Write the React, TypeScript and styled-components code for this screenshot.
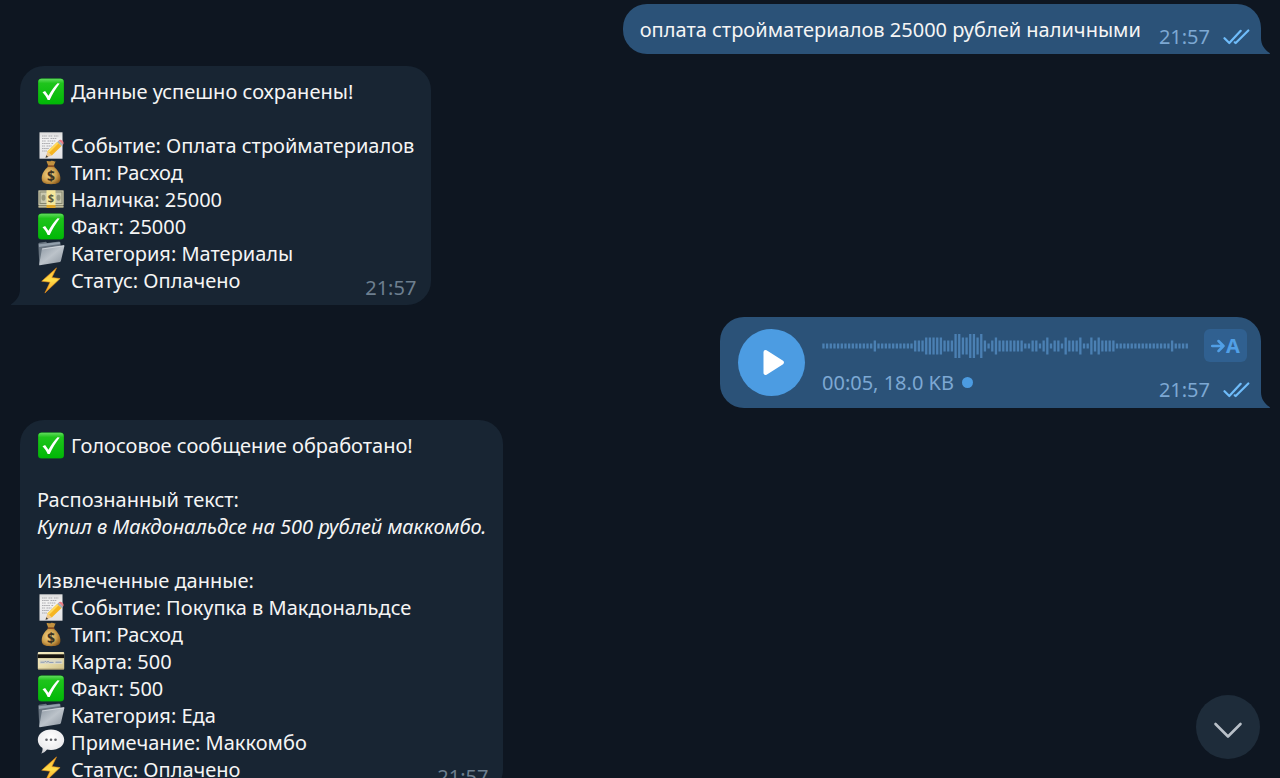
import React from "react";
import styled, { createGlobalStyle } from "styled-components";

const GlobalStyle = createGlobalStyle`
  *, *::before, *::after { box-sizing: border-box; }
  body {
    margin: 0;
    background: #0e1621;
    color: #f5f5f5;
    font-family: "Noto Sans", "Open Sans", sans-serif;
    font-size: 20px;
    line-height: 27px;
  }
  button { font: inherit; border: 0; padding: 0; cursor: pointer; }
`;

const Chat = styled.main`
  position: relative;
  height: 100vh;
  overflow: hidden;
`;

const Feed = styled.ol`
  display: flex;
  flex-direction: column;
  gap: 12px;
  margin: 0;
  padding: 4px 19px 12px 20px;
  list-style: none;
`;

const Bubble = styled.li<{ $own?: boolean }>`
  position: relative;
  align-self: ${(p) => (p.$own ? "flex-end" : "flex-start")};
  max-width: 100%;
  padding: 12px 17px 11px;
  background: ${(p) => (p.$own ? "#2b5278" : "#182533")};
  border-radius: ${(p) => (p.$own ? "24px 24px 0 24px" : "24px 24px 24px 0")};
`;

const VoiceBubble = styled(Bubble)`
  display: flex;
  gap: 17px;
  padding: 12px 14px 12px 18px;
`;

const TailShape = styled.svg<{ $own?: boolean }>`
  position: absolute;
  bottom: 0;
  width: 9px;
  height: 16px;
  ${(p) => (p.$own ? "left: 100%;" : "right: 100%; transform: scaleX(-1);")}
  fill: ${(p) => (p.$own ? "#2b5278" : "#182533")};
`;

const Line = styled.p`
  display: flex;
  gap: 6px;
  min-height: 27px;
  margin: 0;
  white-space: nowrap;
`;

const Quote = styled(Line)`
  font-style: italic;
`;

const LastLine = styled.div`
  display: flex;
  justify-content: space-between;
  gap: 18px;
`;

const Meta = styled.span<{ $own?: boolean; $outset: number }>`
  display: flex;
  align-items: center;
  gap: 13px;
  align-self: flex-end;
  margin: 0 -${(p) => p.$outset}px -7px 0;
  color: ${(p) => (p.$own ? "#7da8d3" : "#6d7f8f")};
`;

const Ticks = styled.svg`
  width: 27px;
  height: 16px;
  fill: none;
  stroke: #6fbcfa;
  stroke-width: 2.2;
  stroke-linecap: round;
  stroke-linejoin: round;
`;

const Emoji = styled.svg`
  flex: none;
  width: 28px;
  height: 27px;
`;

const Defs = styled.svg`
  position: absolute;
  width: 0;
  height: 0;
`;

const PlayButton = styled.button`
  flex: none;
  width: 67px;
  height: 67px;
  border-radius: 50%;
  background: #4c9ce2;
  svg { display: block; width: 67px; height: 67px; }
`;

const VoiceBody = styled.div`
  display: flex;
  flex-direction: column;
  gap: 7px;
`;

const VoiceTop = styled.div`
  display: flex;
  align-items: center;
  gap: 15px;
`;

const Wave = styled.svg`
  width: 367px;
  height: 24px;
  fill: #4b80b3;
`;

const TranscribeButton = styled.button`
  display: flex;
  align-items: center;
  justify-content: center;
  gap: 1px;
  width: 43px;
  height: 33px;
  border-radius: 6px;
  background: #306090;
  color: #519fe6;
  font-weight: 700;
  svg { width: 14px; height: 14px; }
`;

const VoiceBottom = styled.div`
  display: flex;
  justify-content: space-between;
  height: 27px;
`;

const VoiceInfo = styled.span`
  display: flex;
  align-items: center;
  gap: 8px;
  color: #7da8d3;
`;

const UnheardDot = styled.i`
  width: 11px;
  height: 11px;
  border-radius: 50%;
  background: #4c9ce2;
`;

const ScrollButton = styled.button`
  position: absolute;
  right: 20px;
  bottom: 19px;
  width: 64px;
  height: 64px;
  border-radius: 50%;
  background: #1e2c3a;
  svg { display: block; width: 64px; height: 64px; }
`;

const EmojiDefs = () => (
  <Defs aria-hidden="true">
    <defs>
      <linearGradient id="green" x1="0" y1="0" x2="0" y2="1">
        <stop offset="0" stopColor="#62dc5e" />
        <stop offset="0.18" stopColor="#1fc41c" />
        <stop offset="1" stopColor="#00b806" />
      </linearGradient>
      <linearGradient id="paper" x1="0" y1="0" x2="0" y2="1">
        <stop offset="0" stopColor="#dcdcdc" />
        <stop offset="0.3" stopColor="#f2f2f2" />
        <stop offset="1" stopColor="#e2e2e4" />
      </linearGradient>
      <radialGradient id="bag" cx="0.4" cy="0.45" r="0.65">
        <stop offset="0" stopColor="#f0d488" />
        <stop offset="0.6" stopColor="#cfa04c" />
        <stop offset="1" stopColor="#8a5a1c" />
      </radialGradient>
      <linearGradient id="folder" x1="0" y1="0" x2="1" y2="1">
        <stop offset="0" stopColor="#8b96a1" />
        <stop offset="0.5" stopColor="#bcc3ca" />
        <stop offset="1" stopColor="#8a939d" />
      </linearGradient>
      <linearGradient id="bolt" x1="0" y1="0" x2="0" y2="1">
        <stop offset="0" stopColor="#ffb52b" />
        <stop offset="0.5" stopColor="#ffde4a" />
        <stop offset="1" stopColor="#f79a1c" />
      </linearGradient>
      <linearGradient id="card" x1="0" y1="0" x2="1" y2="1">
        <stop offset="0" stopColor="#f5ecc4" />
        <stop offset="0.5" stopColor="#eadfae" />
        <stop offset="1" stopColor="#cfc188" />
      </linearGradient>
      <radialGradient id="speech" cx="0.5" cy="0.35" r="0.7">
        <stop offset="0" stopColor="#ffffff" />
        <stop offset="0.7" stopColor="#ececee" />
        <stop offset="1" stopColor="#bfc1c6" />
      </radialGradient>
    </defs>
  </Defs>
);

const drawings = {
  check: (
    <>
      <rect x="0.5" y="0.5" width="26" height="26" rx="3.5" fill="#0a9a10" />
      <rect x="0.9" y="0.7" width="25.2" height="25.2" rx="3.2" fill="url(#green)" />
      <path d="M5 14.3 L7.6 12.9 L11 17.8 C13.6 12.8 16.6 8.6 20 5.2 L22.2 5.4 C18.2 10.6 14.8 16 12.2 21.9 L10.2 21.9 C8.8 19 7.1 16.6 5 14.3 Z" fill="#fff" />
    </>
  ),
  memo: (
    <>
      <rect x="2" y="0.3" width="23" height="26.4" fill="url(#paper)" />
      <path d="M4.5 4h5M11 4h4M16.500 4h4.500M4.500 6.500h7M13 6.500h6M4.500 9h4M10 9h8M4.500 11.500h8M14 11.500h2M4.500 14h3M9 14h5M4.500 16.500h7M4.500 19h5" stroke="#a4a4a8" strokeWidth="0.9" strokeDasharray="1.6 0.5" />
      <path d="M8 25.800 L9.900 19.600 L14.300 23.600 Z" fill="#efc88c" />
      <path d="M8 25.800 L8.800 23.200 L10.800 24.900 Z" fill="#3c3a38" />
      <path d="M9.900 19.600 L19.700 9.900 L24.100 14 L14.300 23.600 Z" fill="#f5b522" />
      <path d="M9.900 19.600 L19.700 9.900 L21.200 11.300 L11.400 21 Z" fill="#ffd95a" />
      <path d="M19.700 9.900 L21.200 8.400 L25.600 12.500 L24.100 14 Z" fill="#a9adb2" />
      <path d="M21.200 8.400 C23.200 6.300 27.500 10 25.600 12.500 Z" fill="#ea7b84" />
    </>
  ),
  bag: (
    <>
      <path d="M9 2.600 C10.500 1.200 12 3 13.500 2 C15 1.200 16.500 3 18.200 2.300 L16 7.200 H11 Z" fill="#c2913f" />
      <path d="M10.800 7.500 C7 10.500 4 15 4.200 19.800 C4.400 24 7 25.200 13.500 25.200 C20 25.200 22.700 24 22.900 19.800 C23 15 20 10.500 16.200 7.500 Z" fill="url(#bag)" />
      <rect x="10" y="6.200" width="7" height="1.900" rx="0.900" fill="#8a4f22" />
      <text x="13.500" y="22" textAnchor="middle" fontSize="14" fontWeight="700" fill="#3a3222">$</text>
    </>
  ),
  cash: (
    <>
      <rect x="1" y="4.500" width="25" height="17.500" fill="#8f8c70" />
      <rect x="1" y="4.500" width="25" height="14.500" fill="#c9c8ae" />
      <rect x="2.500" y="6" width="22" height="11.500" fill="none" stroke="#85866f" strokeWidth="1" />
      <ellipse cx="6" cy="11.700" rx="2" ry="3" fill="#97987e" />
      <ellipse cx="21" cy="11.700" rx="2" ry="3" fill="#97987e" />
      <path d="M1 20.500h25" stroke="#c9c6a4" strokeWidth="0.800" />
      <rect x="9" y="4.300" width="9" height="14.700" fill="#f6e79a" />
      <rect x="9" y="19" width="9" height="3" fill="#e0a628" />
      <text x="13.500" y="15.800" textAnchor="middle" fontSize="11" fontWeight="700" fill="#5c5a3c">$</text>
    </>
  ),
  folder: (
    <>
      <path d="M0.800 3.800 L1.600 2.800 L8.500 1.800 L9.600 3 L21.800 1.400 L23 2.400 L23.200 16 L1.800 24.500 Z" fill="#66727e" />
      <path d="M1.400 4.300 L22.400 2.100 V4 L1.500 7 Z" fill="#93a0ac" />
      <path d="M5.200 8.300 L26.300 5.300 C26.800 5.300 27 5.600 26.900 6.100 L23.400 21 C23.300 21.500 23 21.800 22.500 21.900 L2.300 25.300 C1.900 25.300 1.600 25 1.700 24.600 L4.400 9 C4.500 8.600 4.800 8.400 5.200 8.300 Z" fill="url(#folder)" />
      <path d="M4.600 9 L26.600 5.800" stroke="#dce1e6" strokeWidth="0.700" />
    </>
  ),
  bolt: (
    <path d="M19 0.900 L4.200 14.200 L12.500 15.200 L7.400 26 L22.600 11.600 L14.400 10.500 Z" fill="url(#bolt)" stroke="#e78f1b" strokeWidth="0.600" strokeLinejoin="round" />
  ),
  card: (
    <>
      <rect x="0.300" y="4" width="26.400" height="17.500" rx="1" fill="url(#card)" />
      <rect x="0.300" y="6.300" width="26.400" height="3.800" fill="#17140e" />
      <rect x="2" y="11.600" width="23" height="4.400" fill="#dcd9c4" />
      <path d="M3 14.200h4l1-1 1.200 1.200 1.300-1 1.500 1h4M18 14.200h6" fill="none" stroke="#7d8fb2" strokeWidth="0.900" />
      <path d="M0.500 21h26" stroke="#a4966a" strokeWidth="0.800" />
    </>
  ),
  speech: (
    <>
      <path d="M13.500 0.400 C21 0.400 26.700 4.700 26.700 10.700 C26.700 16.700 21 21 13.500 21 C12 21 10.800 20.900 9.500 20.600 C7.800 22.800 5.800 24.300 3.600 24.600 C4.800 23 5.200 21.400 5 19 C2 17.200 0.300 14.200 0.300 10.700 C0.300 4.700 6 0.400 13.500 0.400 Z" fill="url(#speech)" />
      <g fill="#606268">
        <circle cx="9" cy="10.700" r="1.300" />
        <circle cx="13.500" cy="10.700" r="1.300" />
        <circle cx="18" cy="10.700" r="1.300" />
      </g>
    </>
  ),
};

type EmojiName = keyof typeof drawings;

const Item = ({ icon, children }: { icon: EmojiName; children: React.ReactNode }) => (
  <Line>
    <Emoji viewBox="-0.500 0 28 27" aria-hidden="true">{drawings[icon]}</Emoji>
    <span>{children}</span>
  </Line>
);

const Tail = ({ own }: { own?: boolean }) => (
  <TailShape $own={own} viewBox="0 0 9 16" aria-hidden="true">
    <path d="M0 0 V16 H8.500 C9 16 9.200 15.500 8.700 15.100 C3.500 11.500 0 7 0 0 Z" />
  </TailShape>
);

const Sent = ({ own, outset = 2 }: { own?: boolean; outset?: number }) => (
  <Meta $own={own} $outset={outset}>
    <time>21:57</time>
    {own && (
      <Ticks viewBox="0 0 27 16" role="img" aria-label="Прочитано">
        <path d="M1.500 9.200 L6.300 14 L17.700 1.800" />
        <path d="M11.800 13.300 L12.700 14 L25.300 1.500" />
      </Ticks>
    )}
  </Meta>
);

// Peak level of every bar in the voice recording, as [level, repeat] runs.
const runs: [number, number][] = [
  [5, 14], [11, 1], [5, 10], [11, 3], [17, 5], [11, 3], [24, 2], [17, 2], [24, 2], [17, 1],
  [24, 1], [11, 1], [5, 1], [11, 1], [17, 1], [11, 7], [5, 2], [11, 2], [5, 1], [11, 1],
  [17, 1], [5, 1], [11, 2], [5, 1], [17, 1], [11, 3], [17, 1], [5, 2], [17, 1], [11, 1],
  [17, 1], [11, 4], [5, 15], [11, 1], [5, 4],
];
const peaks = runs.flatMap(([level, count]) => Array<number>(count).fill(level));

export default function App() {
  return (
    <Chat>
      <GlobalStyle />
      <EmojiDefs />
      <Feed>
        <Bubble $own>
          <LastLine>
            <Line>оплата стройматериалов 25000 рублей наличными</Line>
            <Sent own outset={6} />
          </LastLine>
          <Tail own />
        </Bubble>

        <Bubble>
          <Item icon="check">Данные успешно сохранены!</Item>
          <Line />
          <Item icon="memo">Событие: Оплата стройматериалов</Item>
          <Item icon="bag">Тип: Расход</Item>
          <Item icon="cash">Наличка: 25000</Item>
          <Item icon="check">Факт: 25000</Item>
          <Item icon="folder">Категория: Материалы</Item>
          <LastLine>
            <Item icon="bolt">Статус: Оплачено</Item>
            <Sent />
          </LastLine>
          <Tail />
        </Bubble>

        <VoiceBubble $own>
          <PlayButton aria-label="Воспроизвести">
            <svg viewBox="0 0 67 67" aria-hidden="true">
              <path d="M27.500 23 L44 33.500 L27.500 44 Z" fill="#fff" stroke="#fff" strokeWidth="4" strokeLinejoin="round" />
            </svg>
          </PlayButton>
          <VoiceBody>
            <VoiceTop>
              <Wave viewBox="0 0 367 24" aria-hidden="true">
                {peaks.map((h, i) => (
                  <rect key={i} x={i * 3.67 + 0.3} y={12 - h / 2} width="2.3" height={h} />
                ))}
              </Wave>
              <TranscribeButton aria-label="Расшифровать">
                <svg viewBox="0 0 14 14" aria-hidden="true">
                  <path d="M1.200 7 H12.500 M7.500 2 L12.500 7 L7.500 12" fill="none" stroke="currentColor" strokeWidth="2.500" strokeLinecap="round" strokeLinejoin="round" />
                </svg>
                <span>A</span>
              </TranscribeButton>
            </VoiceTop>
            <VoiceBottom>
              <VoiceInfo>
                00:05, 18.0 KB
                <UnheardDot />
              </VoiceInfo>
              <Sent own outset={3} />
            </VoiceBottom>
          </VoiceBody>
          <Tail own />
        </VoiceBubble>

        <Bubble>
          <Item icon="check">Голосовое сообщение обработано!</Item>
          <Line />
          <Line>Распознанный текст:</Line>
          <Quote>Купил в Макдональдсе на 500 рублей маккомбо.</Quote>
          <Line />
          <Line>Извлеченные данные:</Line>
          <Item icon="memo">Событие: Покупка в Макдональдсе</Item>
          <Item icon="bag">Тип: Расход</Item>
          <Item icon="card">Карта: 500</Item>
          <Item icon="check">Факт: 500</Item>
          <Item icon="folder">Категория: Еда</Item>
          <Item icon="speech">Примечание: Маккомбо</Item>
          <LastLine>
            <Item icon="bolt">Статус: Оплачено</Item>
            <Sent />
          </LastLine>
          <Tail />
        </Bubble>
      </Feed>

      <ScrollButton aria-label="Вниз">
        <svg viewBox="0 0 64 64" aria-hidden="true">
          <path d="M19.500 29 L32 41.500 L44.500 29" fill="none" stroke="#b9c0c8" strokeWidth="2.600" strokeLinecap="round" strokeLinejoin="round" />
        </svg>
      </ScrollButton>
    </Chat>
  );
}
